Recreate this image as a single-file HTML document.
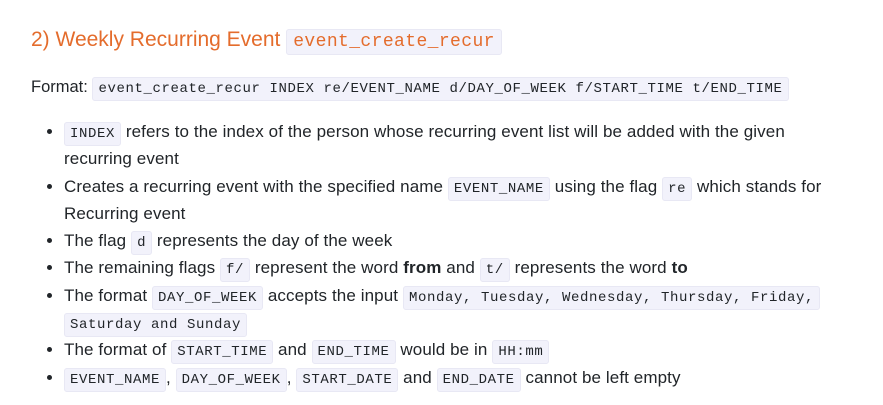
<!DOCTYPE html>
<html><head><style>
body{margin:0;background:#fff;font-family:"Liberation Sans",sans-serif;color:#212529;width:883px;height:405px;overflow:hidden}
h2{position:absolute;left:31px;top:24px;margin:0;font-weight:normal;font-size:21px;color:#e46c2c;line-height:32px}
code{font-family:"Liberation Mono",monospace;font-size:14px;letter-spacing:0.6px;background:#f2f2fb;border:1px solid #e8e8f4;border-radius:3px;padding:3px 5px;color:#212529;line-height:16px}
h2 code{font-size:18px;letter-spacing:0.4px;color:#e46c2c;padding:2px 6px;line-height:22px}
.fmt{position:absolute;left:31px;top:74px;font-size:16.5px;line-height:26px;margin:0}
ul{position:absolute;left:20px;top:118px;margin:0;padding-left:44px;width:776px;font-size:17px;letter-spacing:0.1px;line-height:27.3px}
li{margin:0}
</style></head><body>
<h2>2) Weekly Recurring Event <code>event_create_recur</code></h2>
<p class="fmt">Format: <code>event_create_recur INDEX re/EVENT_NAME d/DAY_OF_WEEK f/START_TIME t/END_TIME</code></p>
<ul>
<li><code>INDEX</code> refers to the index of the person whose recurring event list will be added with the given<br>recurring event</li>
<li>Creates a recurring event with the specified name <code>EVENT_NAME</code> using the flag <code>re</code> which stands for<br>Recurring event</li>
<li>The flag <code>d</code> represents the day of the week</li>
<li>The remaining flags <code>f/</code> represent the word <b>from</b> and <code>t/</code> represents the word <b>to</b></li>
<li>The format <code>DAY_OF_WEEK</code> accepts the input <code>Monday, Tuesday, Wednesday, Thursday, Friday,</code><br><code>Saturday and Sunday</code></li>
<li>The format of <code>START_TIME</code> and <code>END_TIME</code> would be in <code>HH:mm</code></li>
<li><code>EVENT_NAME</code>, <code>DAY_OF_WEEK</code>, <code>START_DATE</code> and <code>END_DATE</code> cannot be left empty</li>
</ul>
</body></html>
